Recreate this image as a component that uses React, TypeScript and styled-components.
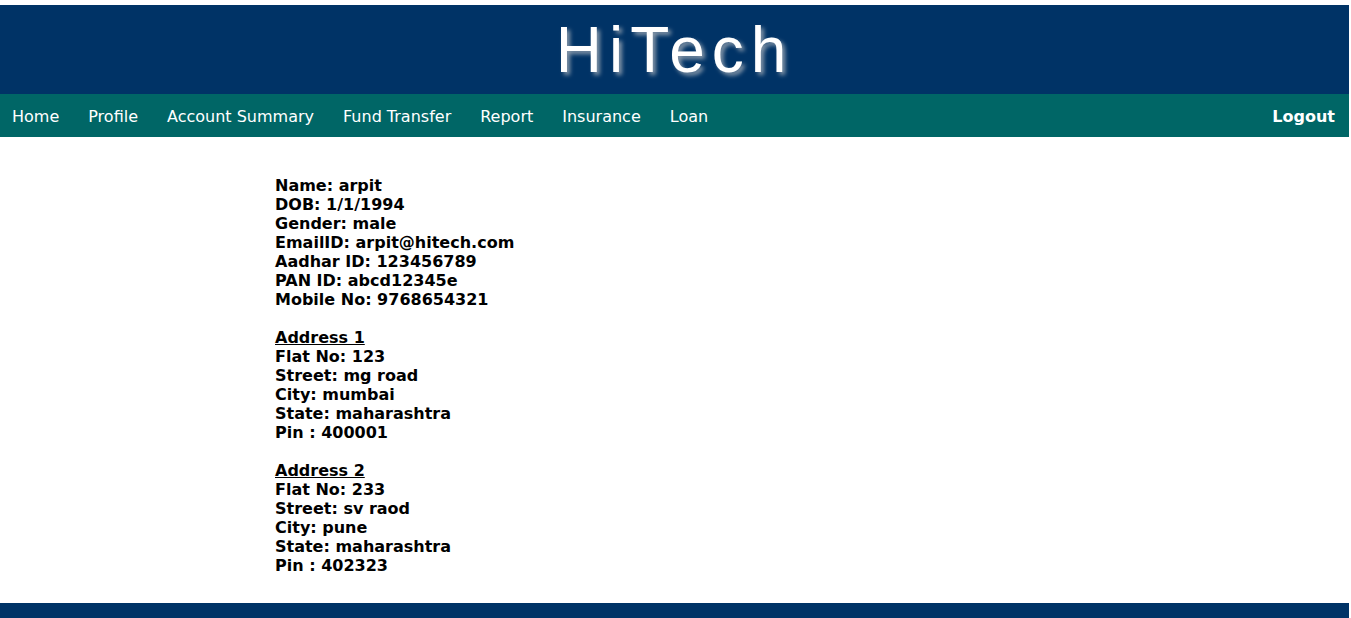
import React from "react";
import styled, { createGlobalStyle } from "styled-components";

const Global = createGlobalStyle`
  html, body { margin: 0; padding: 0; background: #fff; }
  body { padding: 5px 2px 0 0; font-family: "DejaVu Sans", Verdana, sans-serif; }
`;

const Page = styled.div`
  display: flex;
  flex-direction: column;
  min-height: 613px;
`;

const Header = styled.header`
  background: #003366;
  height: 89px;
  display: flex;
  align-items: center;
  justify-content: center;
`;

const Title = styled.h1`
  margin: 0;
  font-family: "Liberation Sans", Arial, sans-serif;
  font-weight: normal;
  font-size: 64px;
  letter-spacing: 7px;
  color: #fff;
  text-shadow: 3px 3px 4px #8899aa;
`;

const Nav = styled.nav`
  background: #006666;
  height: 43px;
  box-sizing: border-box;
  display: flex;
  align-items: center;
  padding: 2px 14px 0 12px;
`;

const NavLink = styled.a<{ $bold?: boolean }>`
  color: #fff;
  text-decoration: none;
  font-family: "DejaVu Sans", Tahoma, sans-serif;
  font-size: 16px;
  font-weight: ${(p) => (p.$bold ? "bold" : "normal")};
  margin-right: 29px;
  &:last-child { margin-right: 0; margin-left: auto; }
`;

const Main = styled.main`
  flex: 1;
  padding: 39px 0 27px 275px;
`;

const Block = styled.div`
  font-weight: bold;
  font-size: 16px;
  line-height: 19px;
  color: #000;
  margin-bottom: 19px;
  &:last-child { margin-bottom: 0; }
`;

const Heading = styled.div`
  text-decoration: underline;
`;

const Footer = styled.footer`
  background: #003366;
  height: 15px;
`;

const links = ["Home", "Profile", "Account Summary", "Fund Transfer", "Report", "Insurance", "Loan"];

export default function App() {
  return (
    <Page>
      <Global />
      <Header>
        <Title>HiTech</Title>
      </Header>
      <Nav>
        {links.map((l) => (
          <NavLink key={l} href="#">{l}</NavLink>
        ))}
        <NavLink href="#" $bold>Logout</NavLink>
      </Nav>
      <Main>
        <Block>
          <div>Name: arpit</div>
          <div>DOB: 1/1/1994</div>
          <div>Gender: male</div>
          <div>EmailID: arpit@hitech.com</div>
          <div>Aadhar ID: 123456789</div>
          <div>PAN ID: abcd12345e</div>
          <div>Mobile No: 9768654321</div>
        </Block>
        <Block>
          <Heading>Address 1</Heading>
          <div>Flat No: 123</div>
          <div>Street: mg road</div>
          <div>City: mumbai</div>
          <div>State: maharashtra</div>
          <div>Pin : 400001</div>
        </Block>
        <Block>
          <Heading>Address 2</Heading>
          <div>Flat No: 233</div>
          <div>Street: sv raod</div>
          <div>City: pune</div>
          <div>State: maharashtra</div>
          <div>Pin : 402323</div>
        </Block>
      </Main>
      <Footer />
    </Page>
  );
}
